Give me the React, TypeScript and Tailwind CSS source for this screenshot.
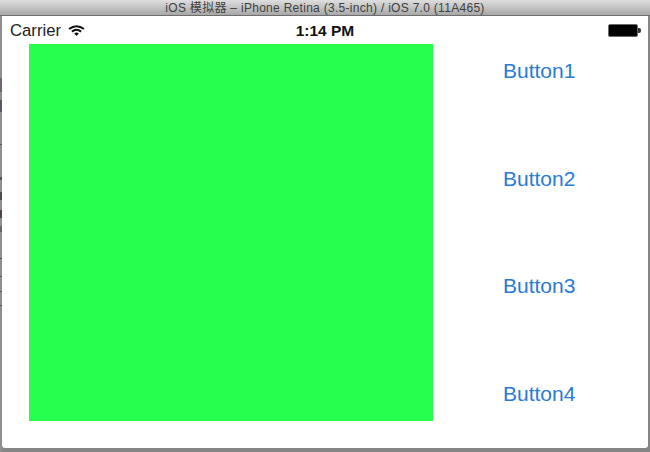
const buttons = ['Button1', 'Button2', 'Button3', 'Button4'];

const WifiIcon = () => (
  <svg width="17" height="11" viewBox="0 0 17 11" className="ml-[7px]">
    <path d="M1 4 Q8.5 -1.6 16 4" fill="none" stroke="#111" strokeWidth="2" />
    <path d="M3.9 6.6 Q8.5 3 13.1 6.6" fill="none" stroke="#111" strokeWidth="2" />
    <path d="M6.2 8.4 Q8.5 6.8 10.8 8.4 L8.5 11 Z" fill="#111" />
  </svg>
);

const BatteryIcon = () => (
  <div className="flex items-center justify-self-end mt-[-2px]">
    <div className="w-[30px] h-[13px] rounded-[2px] border border-[#6a6a6a] bg-black" />
    <div className="w-[3px] h-[5px] rounded-r-[2px] bg-[#333]" />
  </div>
);

// marks of the desktop showing through beside the window
const EdgeMarks = () => (
  <div className="w-[2px] flex flex-col bg-[#8f8f8f]">
    <div className="mt-[62px] h-[14px] bg-[#6f6570]" />
    <div className="mt-[8px] h-[12px] bg-[#5a5560]" />
    <div className="mt-[32px] h-[1px] bg-[#555]" />
    <div className="mt-[32px] h-[3px] bg-[#555]" />
    <div className="mt-[12px] h-[8px] bg-[#4c4c4c]" />
    <div className="mt-[10px] h-[8px] bg-[#4f4548]" />
    <div className="mt-[8px] h-[6px] bg-[#666]" />
    <div className="mt-[26px] h-[1px] bg-[#555]" />
    <div className="mt-[17px] h-[1px] bg-[#555]" />
    <div className="mt-[14px] h-[1px] bg-[#555]" />
    <div className="mt-[13px] h-[1px] bg-[#555]" />
  </div>
);

export default function App() {
  return (
    <div className="w-[650px] h-[452px] flex flex-col overflow-hidden bg-[#858585] font-['Liberation_Sans',sans-serif]">
      <div className="h-[16px] shrink-0 flex items-center justify-center bg-gradient-to-b from-[#dedede] to-[#a8a8a8] border-b border-[#6e6e6e] text-[12px] leading-none tracking-[0.29px] text-[#404040] font-['Liberation_Sans','Noto_Sans_CJK_SC',sans-serif]">
        iOS 模拟器 – iPhone Retina (3.5-inch) / iOS 7.0 (11A465)
      </div>

      <div className="flex-1 flex min-h-0">
        <EdgeMarks />
        <div className="flex-1 mr-[2px] mb-[4px] rounded-b-[3px] bg-white flex flex-col min-h-0">
          <div className="h-[28px] pt-[2px] grid grid-cols-[1fr_auto_1fr] items-center pl-[8px] pr-[7px]">
            <div className="flex items-center text-[16.7px] text-[#222]">
              Carrier
              <WifiIcon />
            </div>
            <div className="text-[15.5px] font-bold text-[#111] ml-[-1px]">1:14 PM</div>
            <BatteryIcon />
          </div>

          <div className="flex h-[377px] pl-[27px]">
            <div className="w-[404px] h-full bg-[#26ff4d]" />
            <div className="flex flex-col justify-between ml-[70px] pt-[15px] pb-[15px]">
              {buttons.map(label => (
                <button key={label} type="button" className="h-[24px] leading-[24px] text-[21px] text-[#2a7ad6] text-left">
                  {label}
                </button>
              ))}
            </div>
          </div>
        </div>
      </div>
    </div>
  );
}
